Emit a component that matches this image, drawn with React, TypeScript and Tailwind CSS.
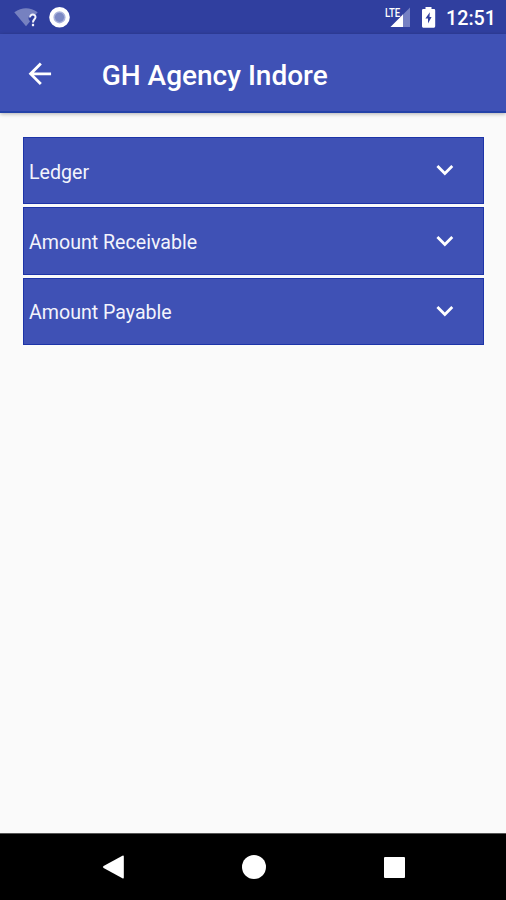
const sections = ["Ledger", "Amount Receivable", "Amount Payable"];

function StatusBar() {
  return (
    <div className="flex h-[34px] shrink-0 items-center bg-[#303f9f]">
      <svg width="80" height="34" viewBox="0 0 80 34">
        <path d="M14.3 12.2Q26 4.5 37.7 12.2L35.5 14.8Q28.5 13.5 28.5 19L30 21.5L26 26.3Z" fill="#7681c0" />
        <path d="M30.1 17.4C29.9 13.6 35.7 13.8 35.5 17.3C35.4 19.3 33 19.5 33 22.4" fill="none" stroke="#f1f2fb" strokeWidth="2" />
        <rect x="31.9" y="23.8" width="2.2" height="2.4" fill="#f1f2fb" />
        <circle cx="59.5" cy="17.3" r="8.2" fill="#a9b2dc" stroke="#fff" strokeWidth="4.2" />
        <circle cx="59.5" cy="17.3" r="4.6" fill="#7c89c4" />
      </svg>
      <div className="ml-auto flex items-center">
        <span className="mr-[-14px] mt-[-9px] w-[19px] origin-left scale-x-[0.8] text-[12px] leading-none font-medium text-white">LTE</span>
        <svg width="56" height="34" viewBox="390 0 56 34">
          <path d="M410 7.5V27H390.5L402 15.5V14.5H403Z" fill="#7580c3" />
          <path d="M403 14.5V27H390.5Z" fill="#fff" />
          <path d="M425.5 7H431.5V9H434Q435.2 9 435.2 10.2V26.3Q435.2 27.7 434 27.7H423.2Q422 27.7 422 26.3V10.2Q422 9 423.2 9H425.5Z" fill="#fff" />
          <path d="M429.8 12.3L425.4 18.6H428V23.4L431.6 17H429.5Z" fill="#303f9f" />
        </svg>
        <span className="mt-[4px] w-[60px] text-[19.7px] leading-none font-medium text-white">12:51</span>
      </div>
    </div>
  );
}

function AppBar() {
  return (
    <header className="z-10 flex h-[79px] shrink-0 items-center border-b-2 border-[#2442a8] bg-[#3f51b5] shadow-[0_1px_4px_rgba(0,0,0,0.3)]">
      <svg className="mt-[2px] ml-[23px]" width="33.7" height="33.7" viewBox="0 0 24 24" fill="#fff">
        <path d="M20 11H7.83l5.59-5.59L12 4l-8 8 8 8 1.41-1.41L7.83 13H20v-2z" />
      </svg>
      <h1 className="ml-[45px] mt-[6px] text-[28px] leading-none font-medium whitespace-nowrap text-white">GH Agency Indore</h1>
    </header>
  );
}

function Section({ title }: { title: string }) {
  return (
    <button className="flex h-[67.3px] w-full items-center justify-between border border-[#1d34a8] bg-[#3f51b5] pr-[21px] pl-[5px] text-left">
      <span className="mt-[4px] text-[19.6px] leading-none text-[#f3f4fc]">{title}</span>
      <svg className="mt-[-1px]" width="33.7" height="33.7" viewBox="0 0 24 24" fill="#fff">
        <path d="M7.41 8.59 12 13.17l4.59-4.58L18 10l-6 6-6-6z" />
      </svg>
    </button>
  );
}

function NavigationBar() {
  return (
    <nav className="flex h-[67px] shrink-0 items-center justify-center gap-[116.5px] border-t border-[#555] bg-black pl-px">
      <svg width="24" height="24" viewBox="0 0 24 24" fill="#fff">
        <path d="M21.4 0.7Q22.8 0 22.8 1.6V22.6Q22.8 24 21.4 23.3L2.6 13Q1 12 2.6 11Z" />
      </svg>
      <span className="size-[24px] rounded-full bg-white" />
      <span className="flex size-[24px] items-center justify-center">
        <span className="size-[21px] rounded-[1px] bg-white" />
      </span>
    </nav>
  );
}

export default function App() {
  return (
    <div className="flex h-[900px] w-[506px] flex-col overflow-hidden bg-[#fafafa] font-[Roboto,sans-serif]">
      <StatusBar />
      <AppBar />
      <main className="flex flex-1 flex-col gap-[3px] pt-[24px] pr-[22px] pl-[23px]">
        {sections.map((title) => (
          <Section key={title} title={title} />
        ))}
      </main>
      <NavigationBar />
    </div>
  );
}
